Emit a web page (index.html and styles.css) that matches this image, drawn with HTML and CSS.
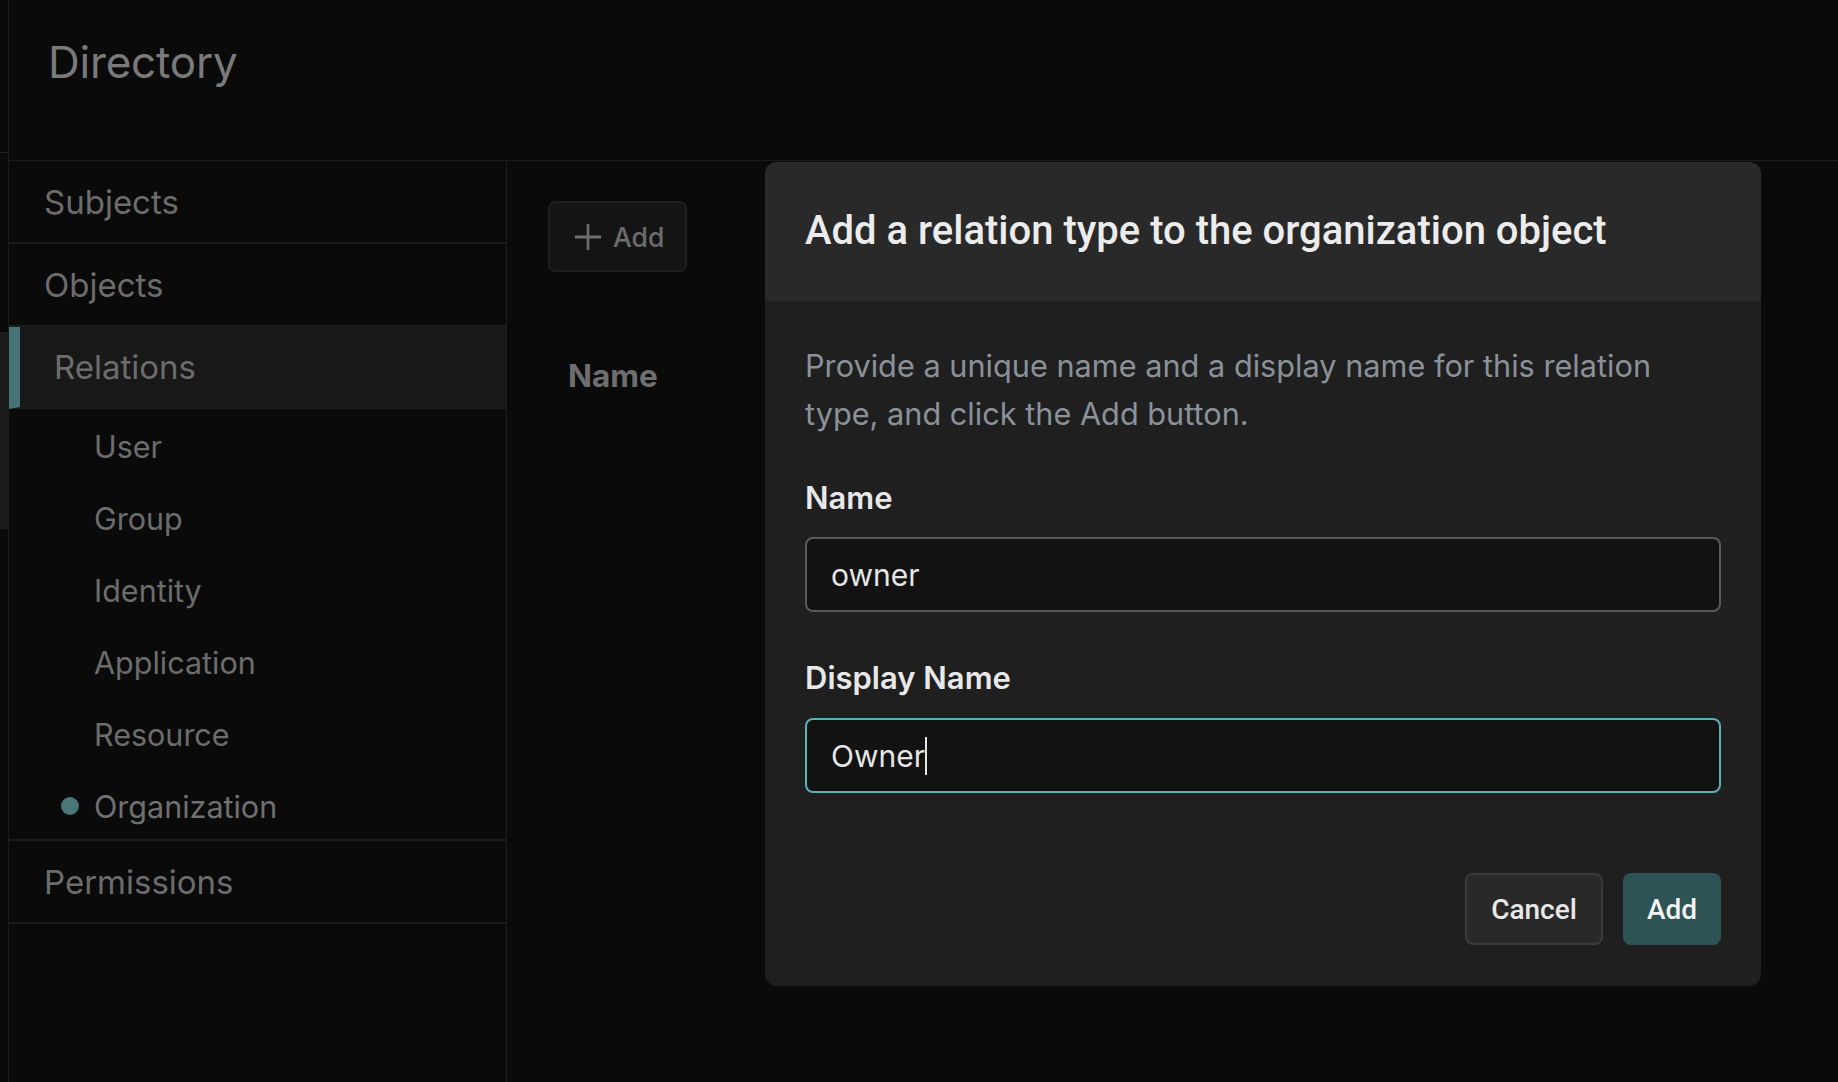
FILE: index.html
```html
<!DOCTYPE html>
<html lang="en">
<head>
<meta charset="utf-8">
<title>Directory</title>
<link rel="stylesheet" href="styles.css">
</head>
<body>
<div class="app">
  <div class="edge">
    <div class="edge-top"></div>
    <div class="edge-thumb"></div>
  </div>
  <div class="page">
    <header class="topbar">
      <h1 class="title">Directory</h1>
    </header>
    <div class="body">
      <nav class="sidebar">
        <div class="nav-item">Subjects</div>
        <div class="nav-item">Objects</div>
        <div class="nav-item active">Relations</div>
        <ul class="sub-list">
          <li class="sub-item">User</li>
          <li class="sub-item">Group</li>
          <li class="sub-item">Identity</li>
          <li class="sub-item">Application</li>
          <li class="sub-item">Resource</li>
          <li class="sub-item current"><span class="dot"></span>Organization</li>
        </ul>
        <div class="nav-item">Permissions</div>
      </nav>
      <main class="content">
        <button class="add-btn" type="button">
          <svg class="plus" viewBox="0 0 28 28" width="28" height="28"><path d="M14 1V27M1 14H27" stroke="currentColor" stroke-width="2.8" fill="none"/></svg>
          <span>Add</span>
        </button>
        <div class="col-head">Name</div>
      </main>
    </div>
  </div>
</div>

<div class="modal">
  <div class="modal-head">
    <h2 class="modal-title">Add a relation type to the organization object</h2>
  </div>
  <div class="modal-body">
    <p class="modal-desc">Provide a unique name and a display name for this relation type, and click the Add button.</p>
    <label class="field-label">Name</label>
    <div class="input">owner</div>
    <label class="field-label second">Display Name</label>
    <div class="input focused">Owner<span class="caret"></span></div>
    <div class="actions">
      <button class="btn cancel" type="button">Cancel</button>
      <button class="btn primary" type="button">Add</button>
    </div>
  </div>
</div>
</body>
</html>
```

FILE: styles.css
```css
* { box-sizing: border-box; }
html, body { margin: 0; padding: 0; }
body {
  background: #0a0a0a;
  font-family: "Inter", "Noto Sans", sans-serif;
  color: #6e6e6e;
  width: 1838px;
  height: 1082px;
  overflow: hidden;
  position: relative;
}
.app {
  display: flex;
  height: 1082px;
}
.edge {
  width: 9px;
  flex: none;
  border-right: 1px solid #1b1b1b;
  display: flex;
  flex-direction: column;
}
.edge-top {
  height: 153px;
  border-bottom: 1px solid #1e1e1e;
  flex: none;
}
.edge-thumb {
  margin-top: 179px;
  height: 197px;
  width: 8px;
  background: #1c1c1c;
}
.page {
  flex: 1;
  display: flex;
  flex-direction: column;
}
.topbar {
  height: 161px;
  border-bottom: 1px solid #1c1c1c;
  padding: 30px 0 0 39px;
  flex: none;
}
.title {
  margin: 0;
  font-weight: 400;
  font-size: 44px;
  line-height: 64px;
  color: #7a7a7a;
  letter-spacing: -0.2px;
}
.body {
  flex: 1;
  display: flex;
}
.sidebar {
  width: 498px;
  flex: none;
  border-right: 1px solid #1c1c1c;
}
.nav-item {
  height: 83px;
  border-bottom: 2px solid #1c1c1c;
  display: flex;
  align-items: center;
  padding-left: 35px;
  font-size: 33px;
  color: #6c6c6c;
}
.nav-item.active {
  background: #181818;
  border-left: 11px solid #467375;
  padding-left: 34px;
  height: 82px;
}
.sub-list {
  list-style: none;
  margin: 0;
  padding: 1px 0 0 0;
  height: 432px;
  border-bottom: 2px solid #1c1c1c;
}
.sub-item {
  height: 72px;
  display: flex;
  align-items: center;
  padding-left: 85px;
  font-size: 30.5px;
  color: #6c6c6c;
  position: relative;
}
.sub-item.current { color: #707070; }
.dot {
  position: absolute;
  left: 52px;
  top: 27px;
  width: 18px;
  height: 18px;
  border-radius: 50%;
  background: #497678;
}
.content {
  flex: 1;
  padding: 40px 0 0 41px;
}
.add-btn {
  display: flex;
  align-items: center;
  gap: 11px;
  width: 139px;
  height: 71px;
  padding: 0 0 0 24px;
  background: #141414;
  border: 2px solid #1e1e1e;
  border-radius: 7px;
  color: #6c6c6c;
  font-family: "Inter", sans-serif;
  font-size: 26.5px;
  font-weight: 500;
}
.plus { flex: none; }
.col-head {
  margin: 84px 0 0 20px;
  font-size: 31.5px;
  font-weight: 700;
  color: #6e6e6e;
  line-height: 40px;
}

.modal {
  position: absolute;
  left: 765px;
  top: 162px;
  width: 996px;
  border-radius: 12px;
  overflow: hidden;
  background: #1f1f1f;
}
.modal-head {
  height: 139px;
  background: #292929;
  display: flex;
  align-items: center;
  padding: 0 40px 2px;
}
.modal-title {
  margin: 0;
  font-family: "Roboto", sans-serif;
  font-weight: 500;
  font-size: 40px;
  color: #ececec;
  letter-spacing: 0;
}
.modal-body {
  padding: 41px 40px 41px;
  display: flex;
  flex-direction: column;
}
.modal-desc {
  margin: 0;
  font-size: 30.7px;
  line-height: 48px;
  color: #8a9199;
}
.field-label {
  display: block;
  margin-top: 40px;
  font-size: 31px;
  line-height: 40px;
  font-weight: 600;
  color: #e8e8e8;
}
.field-label.second { margin-top: 46px; }
.input {
  margin-top: 19px;
  height: 75px;
  border: 2px solid #5a5a5a;
  border-radius: 8px;
  background: #121212;
  display: flex;
  align-items: center;
  padding-left: 24px;
  font-size: 30px;
  color: #e6e6e6;
}
.input.focused { border-color: #5bb1b3; margin-top: 20px; }
.caret {
  display: inline-block;
  width: 2px;
  height: 38px;
  background: #e6e6e6;
  margin-left: 0;
}
.actions {
  margin-top: 80px;
  display: flex;
  justify-content: flex-end;
  gap: 20px;
}
.btn {
  height: 72px;
  border-radius: 8px;
  font-family: "Roboto", sans-serif;
  font-weight: 500;
  font-size: 28px;
  color: #e8e8e8;
}
.btn.cancel {
  width: 138px;
  background: #292929;
  border: 2px solid #3a3a3a;
}
.btn.primary {
  width: 98px;
  background: #2d5355;
  border: none;
  color: #f4f4f4;
}
```
